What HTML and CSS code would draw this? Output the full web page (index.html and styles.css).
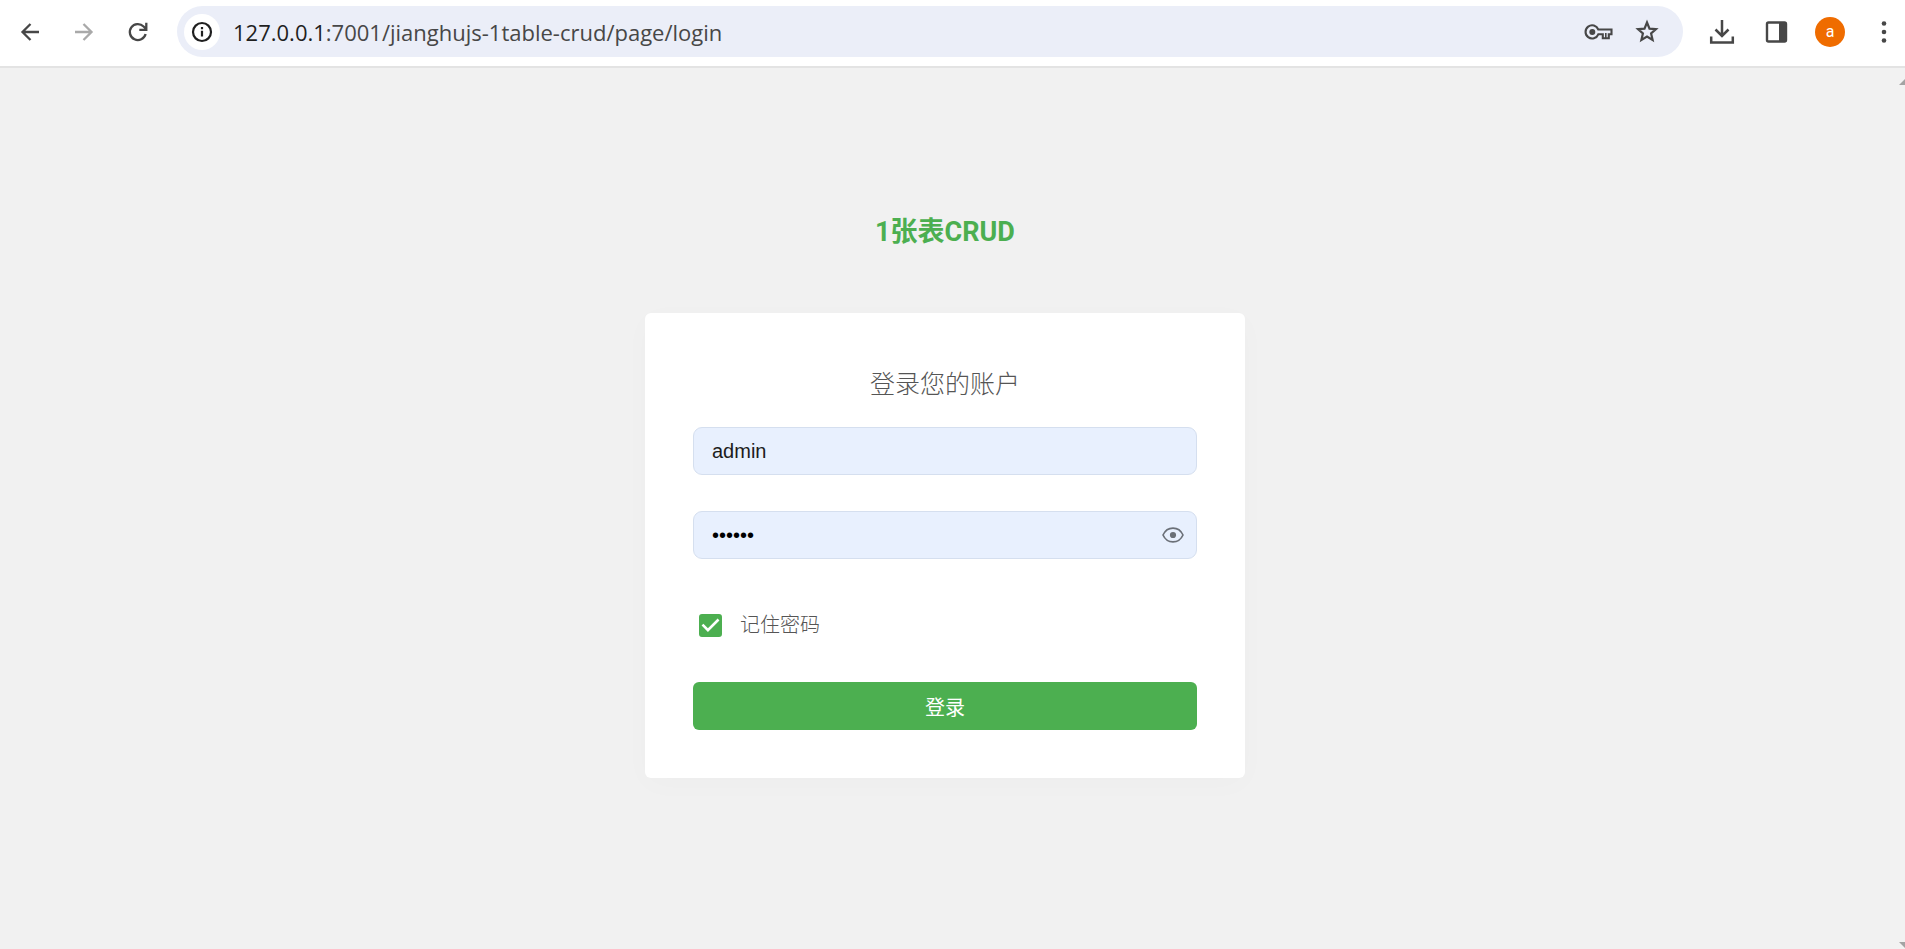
FILE: index.html
```
<!DOCTYPE html>
<html lang="zh-CN">
<head>
<meta charset="utf-8">
<meta name="viewport" content="width=device-width, initial-scale=1">
<title>1张表CRUD</title>
<link rel="stylesheet" href="styles.css">
</head>
<body>
<header class="toolbar">
  <button class="icon-btn" type="button" aria-label="后退">
    <svg class="icon" viewBox="0 0 30 30"><path d="M24 15H8M15.500 7l-8 8 8 8" fill="none" stroke="#474747" stroke-width="2.300"/></svg>
  </button>
  <button class="icon-btn" type="button" aria-label="前进">
    <svg class="icon" viewBox="0 0 30 30"><path d="M6 15h16M14.500 7l8 8-8 8" fill="none" stroke="#a9a9a9" stroke-width="2.300"/></svg>
  </button>
  <button class="icon-btn" type="button" aria-label="重新加载">
    <svg class="icon" viewBox="0 0 30 30"><path d="M22.600 17a8 8 0 1 1-2-7.500l2.500 2.500M23.300 5.800v7h-7" fill="none" stroke="#474747" stroke-width="2.300"/></svg>
  </button>
  <div class="omnibox">
    <button class="site-info" type="button" aria-label="网站信息">
      <svg class="icon" viewBox="0 0 30 30"><circle cx="15" cy="15" r="9" fill="none" stroke="#1f1f1f" stroke-width="2.200"/><path d="M15 13.800V19.500M15 10v2.300" stroke="#1f1f1f" stroke-width="2.200"/></svg>
    </button>
    <a class="url" href="#"><span class="url-host">127.0.0.1</span>:7001/jianghujs-1table-crud/page/login</a>
    <button class="icon-btn" type="button" aria-label="密码">
      <svg class="icon" viewBox="0 0 30 30"><path d="M14.300 12.500A6.600 6.600 0 1 0 14.300 17.300H18.800V21.300H24.800V17.300H27.500V12.500Z" fill="none" stroke="#474747" stroke-width="2.100"/><circle cx="8.300" cy="15" r="3" fill="#474747"/><path d="M21.800 16v5" stroke="#474747" stroke-width="1.600"/></svg>
    </button>
    <button class="icon-btn" type="button" aria-label="收藏">
      <svg class="icon" viewBox="0 0 30 30"><path d="M15 5.500l2.500 6.100 6.500.600-4.900 4.300 1.500 6.500-5.600-3.500L9.400 23l1.500-6.500L6 12.200l6.500-.600z" fill="none" stroke="#474747" stroke-width="2.200"/></svg>
    </button>
  </div>
  <button class="icon-btn" type="button" aria-label="下载">
    <svg class="icon" viewBox="0 0 30 30"><path d="M15 3v16M8.500 12.500l6.500 6.500 6.500-6.500M4.200 19.500v6h21.600v-6" fill="none" stroke="#474747" stroke-width="2.500"/></svg>
  </button>
  <button class="icon-btn" type="button" aria-label="侧边栏">
    <svg class="icon" viewBox="0 0 30 30"><rect x="6" y="5.500" width="19" height="19" rx="1.500" fill="none" stroke="#474747" stroke-width="2.400"/><path d="M18 5.500h7v19h-7z" fill="#474747"/></svg>
  </button>
  <button class="avatar" type="button">a</button>
  <button class="icon-btn" type="button" aria-label="菜单">
    <svg class="icon" viewBox="0 0 30 30" fill="#474747"><circle cx="15" cy="6.500" r="2.300"/><circle cx="15" cy="15" r="2.300"/><circle cx="15" cy="23.500" r="2.300"/></svg>
  </button>
</header>
<div class="viewport">
  <main class="page">
    <h1 class="title">1张表CRUD</h1>
    <form class="card">
      <h2 class="card-title">登录您的账户</h2>
      <div class="field">
        <input class="field-input" type="text" value="admin" aria-label="用户名" autocomplete="off">
      </div>
      <div class="field">
        <input class="field-input field-password" type="password" value="123456" aria-label="密码" autocomplete="off">
        <button class="field-eye" type="button" aria-label="显示密码">
          <svg class="icon-eye" viewBox="0 0 24 24"><path d="M2 12C6.200 2.800 17.800 2.800 22 12 17.800 21.200 6.200 21.200 2 12z" fill="none" stroke="#6b7078" stroke-width="1.700" stroke-linejoin="round"/><circle cx="12" cy="12" r="3.100" fill="#6b7078"/></svg>
        </button>
      </div>
      <label class="remember">
        <span class="check">
          <input class="check-input" type="checkbox" checked>
          <svg class="check-mark" viewBox="3 3 18 18"><path d="M10 17L5 12l1.410-1.420L10 14.170l7.590-7.590L19 8z" fill="#fff"/></svg>
        </span>
        <span>记住密码</span>
      </label>
      <button class="submit" type="button">登录</button>
    </form>
  </main>
  <div class="scrollbar" aria-hidden="true">
    <svg class="scroll-arrow" viewBox="0 0 14 7"><path d="M7 0l7 7H0z" fill="#a3a3a3"/></svg>
    <svg class="scroll-arrow" viewBox="0 0 14 7"><path d="M0 0h14L7 7z" fill="#a3a3a3"/></svg>
  </div>
</div>
</body>
</html>
```
FILE: styles.css
```
* {
  box-sizing: border-box;
}

body {
  margin: 0;
  min-height: 100vh;
  display: flex;
  flex-direction: column;
  overflow: hidden;
  background: #f1f1f1;
  font-family: Roboto, "Noto Sans CJK SC", sans-serif;
}

button {
  padding: 0;
  border: 0;
  background: none;
  font-family: inherit;
  cursor: pointer;
}

.toolbar {
  display: flex;
  align-items: center;
  gap: 24px;
  padding: 6px 6px 9px 15px;
  background: #fff;
  border-bottom: 2px solid #e3e3e3;
}

.icon-btn {
  flex: none;
  width: 30px;
  height: 30px;
}

.icon {
  display: block;
  width: 30px;
  height: 30px;
}

.omnibox {
  flex: 1;
  min-width: 0;
  height: 51px;
  display: flex;
  align-items: center;
  gap: 18px;
  padding: 0 21px 0 7px;
  border-radius: 26px;
  background: #ebeef8;
}

.site-info {
  flex: none;
  display: grid;
  place-items: center;
  width: 36px;
  height: 36px;
  border-radius: 50%;
  background: #fff;
}

.url {
  flex: 1;
  min-width: 0;
  margin-left: -5px;
  overflow: hidden;
  white-space: nowrap;
  color: #474747;
  font-family: "Open Sans", "Noto Sans", sans-serif;
  font-size: 22px;
  line-height: 30px;
  text-decoration: none;
}

.url-host {
  color: #1f1f1f;
}

.avatar {
  flex: none;
  width: 30px;
  height: 30px;
  border-radius: 50%;
  background: #ef6c00;
  color: #fff;
  font-size: 16px;
  line-height: 30px;
}

.viewport {
  flex: 1;
  display: flex;
}

.page {
  flex: 1;
  display: flex;
  flex-direction: column;
  align-items: center;
  padding: 144px 24px 48px;
}

.title {
  margin: 0;
  color: #4caf50;
  font-size: 27px;
  font-weight: 700;
  line-height: 40px;
}

.card {
  width: 100%;
  max-width: 600px;
  margin-top: 61px;
  padding: 48px;
  border-radius: 6px;
  background: #fff;
  box-shadow: 0 6px 30px rgba(0, 0, 0, 0.02);
}

.card-title {
  margin: 0 0 18px;
  color: #555;
  font-size: 25px;
  font-weight: 300;
  line-height: 48px;
  text-align: center;
}

.field {
  position: relative;
  margin-bottom: 36px;
}

.field-input {
  display: block;
  width: 100%;
  height: 48px;
  padding: 0 18px;
  border: 1px solid #d5dfef;
  border-radius: 9px;
  outline: none;
  background: #e8f0fe;
  color: #1c1c1c;
  font-family: "Liberation Sans", Arial, sans-serif;
  font-size: 20px;
}

.field-password {
  padding-right: 54px;
  color: #000;
}

.field-eye {
  position: absolute;
  top: 12px;
  right: 12px;
  width: 24px;
  height: 24px;
}

.icon-eye {
  display: block;
  width: 24px;
  height: 24px;
}

.remember {
  display: flex;
  align-items: center;
  gap: 18px;
  width: fit-content;
  margin: 0 0 42px 6px;
  padding-top: 15px;
  color: #555;
  font-size: 20px;
  font-weight: 300;
  line-height: 30px;
}

.check {
  display: grid;
  width: 23px;
  height: 23px;
}

.check-input,
.check-mark {
  grid-area: 1 / 1;
  width: 23px;
  height: 23px;
  margin: 0;
}

.check-input {
  appearance: none;
  border: 2px solid #4caf50;
  border-radius: 3px;
  background: #fff;
}

.check-input:checked {
  background: #4caf50;
}

.check-mark {
  pointer-events: none;
}

.submit {
  display: block;
  width: 100%;
  height: 48px;
  border-radius: 6px;
  background: #4caf50;
  color: #fff;
  font-size: 20px;
}

.scrollbar {
  flex: none;
  width: 15px;
  display: flex;
  flex-direction: column;
  justify-content: space-between;
  padding: 10px 0 0 9px;
  overflow: hidden;
  background: #f2f2f2;
}

.scroll-arrow {
  flex: none;
  width: 14px;
  height: 7px;
}
```
